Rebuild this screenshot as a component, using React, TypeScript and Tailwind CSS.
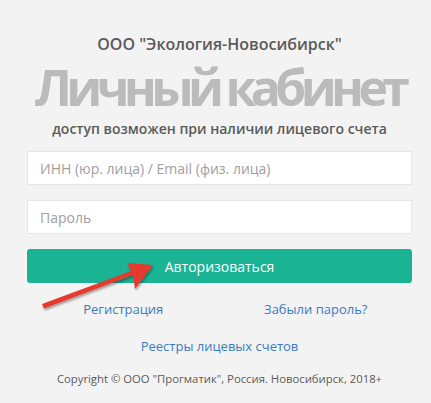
export default function App() {
  return (
    <div className="min-h-[403px] w-full bg-[#f3f3f3] font-['Open_Sans',sans-serif] text-[#676a6c]">
      <div className="relative ml-[27px] w-[385px] pt-[33px] text-center">
        <h2 className="text-[16px] font-semibold leading-[22px] text-[#5a5a5a]">
          ООО "Экология-Новосибирск"
        </h2>
        <h1 className="mt-[6px] flex justify-center whitespace-nowrap text-[50px] font-bold leading-[52px] tracking-[-5.7px] text-[#bbbbbb]">
          Личный кабинет
        </h1>
        <p className="mt-[6px] text-[14px] font-semibold leading-[20px] text-[#5a5a5a]">
          доступ возможен при наличии лицевого счета
        </p>

        <form className="mt-[12px] flex flex-col">
          <input
            type="text"
            placeholder="ИНН (юр. лица) / Email (физ. лица)"
            className="h-[34px] w-full border border-[#e5e6e7] bg-white px-[12px] text-[14px] outline-none placeholder:text-[#a0a0a0]"
          />
          <input
            type="password"
            placeholder="Пароль"
            className="mt-[15px] h-[34px] w-full border border-[#e5e6e7] bg-white px-[12px] text-[14px] outline-none placeholder:text-[#a0a0a0]"
          />
          <button
            type="submit"
            className="mt-[15px] h-[34px] w-full rounded-[3px] bg-[#1ab394] text-[14px] text-white"
          >
            Авторизоваться
          </button>
        </form>

        <div className="mt-[16px] grid grid-cols-2 text-[13px] leading-[20px] text-[#3b7bbf]">
          <a href="#">Регистрация</a>
          <a href="#">Забыли пароль?</a>
        </div>

        <div className="mt-[17px] text-[13px] leading-[20px] text-[#3b7bbf]">
          <a href="#">Реестры лицевых счетов</a>
        </div>

        <p className="mt-[13px] text-[11.3px] leading-[20px] text-[#5a5a5a]">
          Copyright © ООО "Прогматик", Россия. Новосибирск, 2018+
        </p>

        <svg
          className="pointer-events-none absolute left-[-27px] top-0"
          width="200"
          height="330"
          viewBox="0 0 200 330"
        >
          <defs>
            <filter id="sh" x="-20%" y="-20%" width="140%" height="140%">
              <feDropShadow dx="1" dy="2" stdDeviation="1.2" floodColor="#000" floodOpacity="0.35" />
            </filter>
          </defs>
          <path
            d="M44 308.5 L133 275 L135 289 L153 265 L127 263 L131 271 L42 304 Z"
            fill="#e53b2f"
            filter="url(#sh)"
          />
        </svg>
      </div>
    </div>
  );
}
